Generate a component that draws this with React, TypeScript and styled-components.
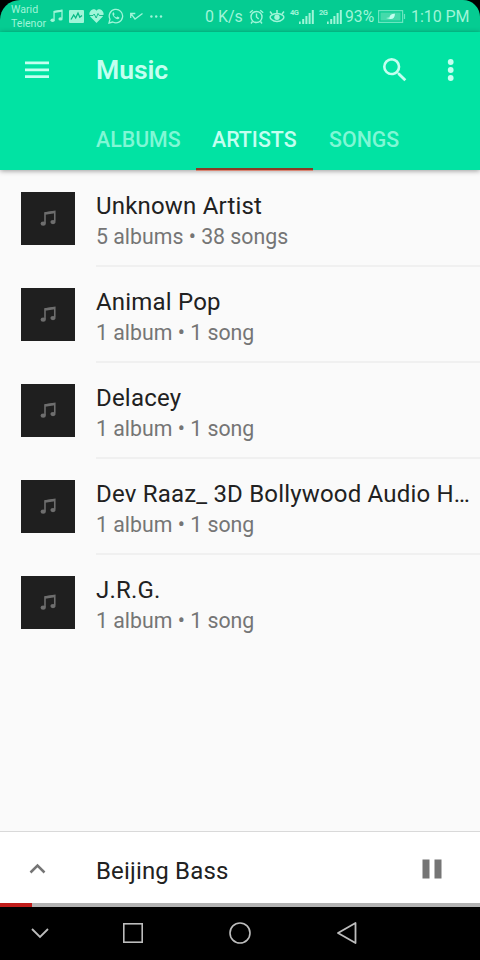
import React from "react";
import styled, { createGlobalStyle } from "styled-components";

const GlobalStyle = createGlobalStyle`
  * { box-sizing: border-box; }
  body { margin: 0; background: #000; }
  svg { display: block; flex: none; }
`;

const Screen = styled.div`
  width: 480px;
  height: 960px;
  display: flex;
  flex-direction: column;
  overflow: hidden;
  background: #fafafa;
  font-family: Roboto, "Noto Sans", sans-serif;
  color: #212121;
`;

const StatusFrame = styled.div`
  flex: none;
  height: 32px;
  background: #000;
`;

const StatusBar = styled.div`
  height: 32px;
  display: flex;
  align-items: center;
  padding-left: 11px;
  border-radius: 20px 17px 0 0;
  background: #05cc92;
  color: #9ff5d8;
  white-space: nowrap;
`;

const Carrier = styled.div`
  width: 39px;
  padding-top: 2px;
  font-size: 10.6px;
  line-height: 14.5px;
`;

const StatusSlot = styled.div<{ $width: number }>`
  flex: none;
  width: ${(p) => p.$width}px;
`;

const StatusText = styled.div<{ $width: number; $size?: number; $spacing?: number }>`
  flex: none;
  width: ${(p) => p.$width}px;
  font-size: ${(p) => p.$size ?? 16}px;
  letter-spacing: ${(p) => p.$spacing ?? 0}px;
  line-height: 32px;
  padding-top: 1px;
`;

const Signal = styled.div<{ $width: number }>`
  flex: none;
  width: ${(p) => p.$width}px;
  display: flex;
  align-items: flex-start;
  font-size: 7.5px;
  font-weight: 700;
  line-height: 8px;
  letter-spacing: -0.5px;
`;

const Header = styled.header`
  position: relative;
  z-index: 1;
  flex: none;
  height: 138px;
  background: #01e3a3;
  box-shadow: 0 1px 5px rgba(0, 0, 0, 0.38);
`;

const Toolbar = styled.div`
  display: flex;
  align-items: center;
  height: 75px;
  padding: 0 13px 0 21px;
  color: #c4fff0;
`;

const Title = styled.h1`
  flex: 1;
  margin: 1px 0 0 43px;
  font-size: 26.6px;
  font-weight: 600;
  line-height: 32px;
  letter-spacing: -0.1px;
`;

const IconButton = styled.button<{ $gap?: number }>`
  display: flex;
  border: 0;
  padding: 0;
  margin-left: ${(p) => p.$gap ?? 0}px;
  background: none;
  color: inherit;
`;

const Tabs = styled.nav`
  display: flex;
  height: 63px;
  padding-left: 80px;
`;

const Tab = styled.div<{ $active?: boolean; $width: number }>`
  width: ${(p) => p.$width}px;
  height: 63px;
  padding: 20px 0 0 16px;
  border-bottom: 2px solid ${(p) => (p.$active ? "#8c3a27" : "transparent")};
  box-shadow: ${(p) => (p.$active ? "0 1px 0 #d98573" : "none")};
  color: ${(p) => (p.$active ? "#c4fff0" : "#80f7d5")};
  font-size: 21.35px;
  font-weight: 500;
  line-height: 26px;
  white-space: nowrap;
`;

const List = styled.main`
  flex: 1;
  min-height: 0;
  padding-top: 1px;
`;

const Row = styled.div`
  display: flex;
  height: 96px;
  padding-left: 21px;
`;

const Thumbnail = styled.div`
  flex: none;
  width: 54px;
  height: 53px;
  margin: 21px 21px 0 0;
  display: flex;
  align-items: center;
  justify-content: center;
  background: #1f1f1f;
  color: #6e6e6e;
`;

const Details = styled.div<{ $divided: boolean }>`
  flex: 1;
  min-width: 0;
  height: 96px;
  padding-top: 18px;
  border-bottom: 2px solid ${(p) => (p.$divided ? "#f0f0f0" : "transparent")};
`;

const Name = styled.div`
  white-space: nowrap;
  font-size: 24px;
  letter-spacing: 0.19px;
  line-height: 34px;
`;

const Meta = styled.div`
  color: #757575;
  font-size: 21.3px;
  line-height: 28px;
  white-space: nowrap;
`;

const Player = styled.section`
  flex: none;
  display: flex;
  align-items: center;
  height: 72px;
  padding: 3px 35px 0 24px;
  border-top: 1px solid #d9d9d9;
  background: #fff;
`;

const Track = styled.div`
  flex: 1;
  margin: 3px 0 0 46px;
  font-size: 24px;
  letter-spacing: 0.16px;
  line-height: 32px;
`;

const Progress = styled.div`
  flex: none;
  height: 4px;
  background: #b3b3b3;
`;

const Played = styled.div`
  width: 32px;
  height: 100%;
  background: #c01c1a;
`;

const SystemNav = styled.footer`
  flex: none;
  display: flex;
  height: 53px;
  padding: 0 80px 1px 0;
  background: #000;
  color: #bdbdbd;
`;

const NavItem = styled.div<{ $width: number }>`
  width: ${(p) => p.$width}px;
  display: flex;
  align-items: center;
  justify-content: center;
`;

const NoteIcon = ({ width, height }: { width: number; height: number }) => (
  <svg width={width} height={height} viewBox="0 0 17 17" fill="none" stroke="currentColor" strokeWidth="1.700">
    <path d="M5.300 13.500V2.700L15.700 1v10.500" />
    <path d="M5.300 3.200 15.700 1.700" strokeWidth="2.600" />
    <ellipse cx="3.400" cy="14" rx="2.800" ry="2.200" fill="currentColor" stroke="none" />
    <ellipse cx="13.800" cy="12.300" rx="2.800" ry="2.200" fill="currentColor" stroke="none" />
  </svg>
);

const SignalBars = () => (
  <svg width="15" height="15" viewBox="0 0 15 15" fill="currentColor">
    <path d="M0 12.500h1.700V15H0zM3.200 10h2v5h-2zM6.400 7h2v8h-2zM9.600 4h2v11h-2zM12.800 1h2v14h-2z" />
  </svg>
);

const artists = [
  { name: "Unknown Artist", meta: "5 albums • 38 songs" },
  { name: "Animal Pop", meta: "1 album • 1 song" },
  { name: "Delacey", meta: "1 album • 1 song" },
  { name: "Dev Raaz_ 3D Bollywood Audio H…", meta: "1 album • 1 song" },
  { name: "J.R.G.", meta: "1 album • 1 song" },
];

const StatusArea = () => (
  <StatusFrame>
    <StatusBar>
      <Carrier>
        Warid
        <br />
        Telenor
      </Carrier>
      <StatusSlot $width={19}>
        <NoteIcon width={13} height={14} />
      </StatusSlot>
      <StatusSlot $width={20}>
        <svg width="15" height="13" viewBox="0 0 15 13">
          <rect width="15" height="13" rx="1" fill="currentColor" />
          <path d="M2 9.500 4.700 5l2 3L9 3l1.800 4.200L13 5.500" fill="none" stroke="#05b985" strokeWidth="1.300" />
        </svg>
      </StatusSlot>
      <StatusSlot $width={19}>
        <svg width="15" height="14" viewBox="0 0 15 14">
          <path d="M7.500 14 1.400 7.800C-2 3.700 4-2.500 7.500 1.700 11-2.500 17 3.700 13.600 7.800Z" fill="currentColor" />
          <path d="M0 6.500h4l1.200-1.500 2 4L9 4.500l1.300 2H15" fill="none" stroke="#05b985" strokeWidth=".9" />
        </svg>
      </StatusSlot>
      <StatusSlot $width={22}>
        <svg width="16" height="16" viewBox="0 0 16 16" fill="none" stroke="currentColor">
          <path d="m1 15 1-3.800A6.700 6.700 0 1 1 4.800 14Z" strokeWidth="1.300" />
          <path d="M5 4.500c-1.200 1-.5 3 1.200 4.800s3.900 2.600 5 1.200l.2-1-2-1-1 1C7 9 6.300 8.200 5.800 7.200l.8-1-.9-2Z" fill="currentColor" stroke="none" />
        </svg>
      </StatusSlot>
      <StatusSlot $width={20}>
        <svg width="13" height="9" viewBox="0 0 13 9" fill="none" stroke="currentColor" strokeWidth="1.300">
          <path d="M.7 6V1.500h4.600M1 1.700l4 5.300 7.500-5.500" />
        </svg>
      </StatusSlot>
      <StatusSlot $width={55}>
        <svg width="13" height="3" viewBox="0 0 13 3" fill="currentColor">
          <circle cx="1.400" cy="1.500" r="1.200" />
          <circle cx="6.200" cy="1.500" r="1.200" />
          <circle cx="11" cy="1.500" r="1.200" />
        </svg>
      </StatusSlot>
      <StatusText $width={44}>0 K/s</StatusText>
      <StatusSlot $width={20}>
        <svg width="15" height="15" viewBox="0 0 15 15" fill="none" stroke="currentColor" strokeWidth="1.400">
          <circle cx="7.500" cy="8" r="5.500" />
          <path d="M7.500 4.500V8l2.200 2M.8 3.800l3-2.600M14.200 3.800l-3-2.600M3.500 12.500l-1.500 2M11.500 12.500l1.500 2" />
        </svg>
      </StatusSlot>
      <StatusSlot $width={21}>
        <svg width="16" height="14" viewBox="0 0 16 14" fill="none" stroke="currentColor" strokeWidth="1.500">
          <path d="M2 6.500C.5 8 1 9 2.500 10.500c3 2.700 8 2.700 11 0C15 9 15.500 8 14 6.500 10.500 3.700 5.500 3.700 2 6.500ZM1 2.500l2 2.500M8 1v3M15 2.500 13 5" />
          <circle cx="8" cy="8.300" r="2.700" fill="currentColor" stroke="none" />
        </svg>
      </StatusSlot>
      <Signal $width={29}>
        <StatusSlot $width={9}>4G</StatusSlot>
        <SignalBars />
      </Signal>
      <Signal $width={26}>
        <StatusSlot $width={8}>2G</StatusSlot>
        <SignalBars />
      </Signal>
      <StatusText $width={33} $size={15.7}>93%</StatusText>
      <StatusSlot $width={33}>
        <svg width="28" height="13" viewBox="0 0 28 13">
          <path d="M.6.600h24v11.800h-24ZM26.500 4v5" fill="none" stroke="currentColor" strokeWidth="1.200" opacity=".65" />
          <path d="M2.500 2.500h20v8h-20z" fill="#45daab" />
          <path d="m8 8 3.500-.4c0-3 2.500-4.100 5.500-3.900-.2 4-2.500 6.300-5.800 5Z" fill="#c4fff0" />
        </svg>
      </StatusSlot>
      <StatusText $width={60} $size={16} $spacing={-0.05}>1:10 PM</StatusText>
    </StatusBar>
  </StatusFrame>
);

export default function App() {
  return (
    <Screen>
      <GlobalStyle />
      <StatusArea />
      <Header>
        <Toolbar>
          <IconButton aria-label="Menu">
            <svg width="32" height="32" viewBox="0 0 32 32" fill="currentColor">
              <path d="M4 7.500h24v2.700H4zM4 14.500h24v2.700H4zM4 21.300h24V24H4z" />
            </svg>
          </IconButton>
          <Title>Music</Title>
          <IconButton aria-label="Search">
            <svg width="32" height="32" viewBox="0 0 24 24" fill="currentColor">
              <path d="M15.500 14h-.79l-.28-.27A6.471 6.471 0 0 0 16 9.500 6.500 6.500 0 1 0 9.500 16c1.610 0 3.090-.59 4.230-1.570l.27.28v.79l5 4.990L20.490 19l-4.990-5zm-6 0C7.010 14 5 11.990 5 9.500S7.010 5 9.500 5 14 7.010 14 9.500 11.990 14 9.500 14z" />
            </svg>
          </IconButton>
          <IconButton aria-label="More options" $gap={24}>
            <svg width="32" height="32" viewBox="0 0 32 32" fill="currentColor">
              <circle cx="15.700" cy="8" r="2.900" />
              <circle cx="15.700" cy="16" r="2.900" />
              <circle cx="15.700" cy="24" r="2.900" />
            </svg>
          </IconButton>
        </Toolbar>
        <Tabs>
          <Tab $width={116}>ALBUMS</Tab>
          <Tab $width={117} $active>ARTISTS</Tab>
          <Tab $width={103}>SONGS</Tab>
        </Tabs>
      </Header>
      <List>
        {artists.map((artist, i) => (
          <Row key={artist.name}>
            <Thumbnail>
              <NoteIcon width={16} height={17} />
            </Thumbnail>
            <Details $divided={i < artists.length - 1}>
              <Name>{artist.name}</Name>
              <Meta>{artist.meta}</Meta>
            </Details>
          </Row>
        ))}
      </List>
      <Player>
        <IconButton aria-label="Expand player">
          <svg width="26" height="26" viewBox="0 0 26 26" fill="none" stroke="#757575" strokeWidth="2.500">
            <path d="m6.500 16.500 7-7 7 7" />
          </svg>
        </IconButton>
        <Track>Beijing Bass</Track>
        <IconButton aria-label="Pause">
          <svg width="25" height="26" viewBox="0 0 25 26" fill="#757575">
            <path d="M2.500 3.500h7v19h-7zM14.500 3.500h7v19h-7z" />
          </svg>
        </IconButton>
      </Player>
      <Progress><Played /></Progress>
      <SystemNav>
        <NavItem $width={80}>
          <svg width="18" height="12" viewBox="0 0 18 12" fill="none" stroke="currentColor" strokeWidth="1.800">
            <path d="m1 2 8 8 8-8" />
          </svg>
        </NavItem>
        <NavItem $width={106}>
          <svg width="20" height="20" viewBox="0 0 20 20" fill="none" stroke="currentColor" strokeWidth="1.600">
            <rect x=".8" y=".8" width="18.400" height="18.400" />
          </svg>
        </NavItem>
        <NavItem $width={108}>
          <svg width="22" height="22" viewBox="0 0 22 22" fill="none" stroke="currentColor" strokeWidth="1.600">
            <circle cx="11" cy="11" r="10" />
          </svg>
        </NavItem>
        <NavItem $width={106}>
          <svg width="20" height="22" viewBox="0 0 20 22" fill="none" stroke="currentColor" strokeWidth="1.800" strokeLinejoin="round">
            <path d="M18.500 1v20L1 11Z" />
          </svg>
        </NavItem>
      </SystemNav>
    </Screen>
  );
}
